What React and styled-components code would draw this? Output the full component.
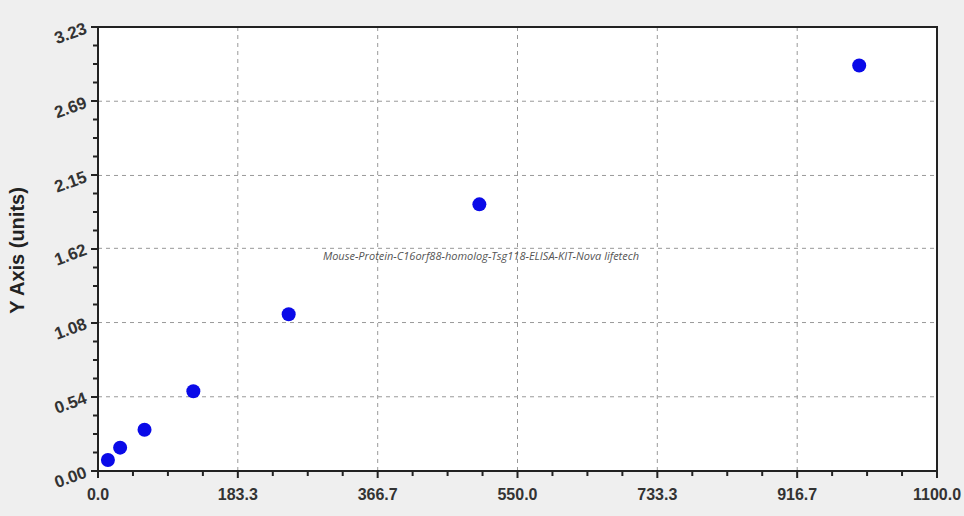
import React from "react";
import styled, { createGlobalStyle } from "styled-components";

const Global = createGlobalStyle`
  html, body { margin: 0; padding: 0; background: #efefef; }
`;

const Page = styled.div`
  width: 964px;
  height: 516px;
  display: flex;
  background: #efefef;
  font-family: "Liberation Sans", Arial, sans-serif;
  overflow: hidden;
`;

const TitleCol = styled.div`
  width: 34px;
  display: flex;
  align-items: center;
  justify-content: center;
`;

const YTitle = styled.div`
  transform: rotate(-90deg);
  white-space: nowrap;
  font-size: 20px;
  font-weight: bold;
  color: #222;
  margin-top: -16px;
`;

const W = 930;
const L = 64, R = 903, T = 27, B = 471;
const xs = (v) => L + (v / 1100) * (R - L);
const ys = (v) => B - (v / 3.23) * (B - T);

const xMajor = [0, 183.3, 366.7, 550.0, 733.3, 916.7, 1100.0];
const yMajor = [0, 0.54, 1.08, 1.62, 2.15, 2.69, 3.23];
const points = [[13, 0.08], [29, 0.17], [61, 0.3], [125, 0.58], [250, 1.14], [500, 1.94], [998, 2.95]];

function Chart() {
  const minorX = [];
  for (let i = 0; i <= 24; i++) minorX.push(L + (i * (R - L)) / 24);
  const minorY = [];
  for (let i = 0; i <= 24; i++) minorY.push(B - (i * (B - T)) / 24);
  return (
    <svg width={W} height={516} style={{ display: "block" }}>
      <rect x={L} y={T} width={R - L} height={B - T} fill="#fff" />
      {xMajor.slice(1, -1).map((v) => (
        <line key={v} x1={xs(v)} x2={xs(v)} y1={T} y2={B} stroke="#999" strokeDasharray="4 4" />
      ))}
      {yMajor.slice(1, -1).map((v) => (
        <line key={v} x1={L} x2={R} y1={ys(v)} y2={ys(v)} stroke="#999" strokeDasharray="4 4" />
      ))}
      <rect x={L} y={T} width={R - L} height={B - T} fill="none" stroke="#222" strokeWidth="2" />
      {minorX.map((x, i) => (
        <line key={i} x1={x} x2={x} y1={B} y2={B + (i % 4 === 0 ? 7 : 5)} stroke="#222" strokeWidth="2" />
      ))}
      {minorY.map((y, i) => (
        <line key={i} x1={L} x2={L - (i % 4 === 0 ? 7 : 5)} y1={y} y2={y} stroke="#222" strokeWidth="2" />
      ))}
      {xMajor.map((v) => (
        <text key={v} x={xs(v)} y={500} textAnchor="middle" fontSize="16" fontWeight="bold" fill="#333" fontFamily="Liberation Sans, Arial, sans-serif">
          {v.toFixed(1)}
        </text>
      ))}
      {yMajor.map((v) => (
        <text key={v} x={L - 10} y={ys(v) + 6} textAnchor="end" fontSize="17" fontWeight="bold" fill="#333"
          fontFamily="Liberation Sans, Arial, sans-serif" transform={`rotate(-20 ${L - 10} ${ys(v) + 6})`}>
          {v.toFixed(2)}
        </text>
      ))}
      <text x={447} y={260} textAnchor="middle" fontSize="11" fontStyle="italic" fill="#555" fontFamily="Open Sans, sans-serif">
        Mouse-Protein-C16orf88-homolog-Tsg118-ELISA-KIT-Nova lifetech
      </text>
      {points.map(([x, y], i) => (
        <circle key={i} cx={xs(x)} cy={ys(y)} r="7" fill="#0a0ae8" />
      ))}
    </svg>
  );
}

export default function App() {
  return (
    <Page>
      <Global />
      <TitleCol>
        <YTitle>Y Axis (units)</YTitle>
      </TitleCol>
      <Chart />
    </Page>
  );
}
